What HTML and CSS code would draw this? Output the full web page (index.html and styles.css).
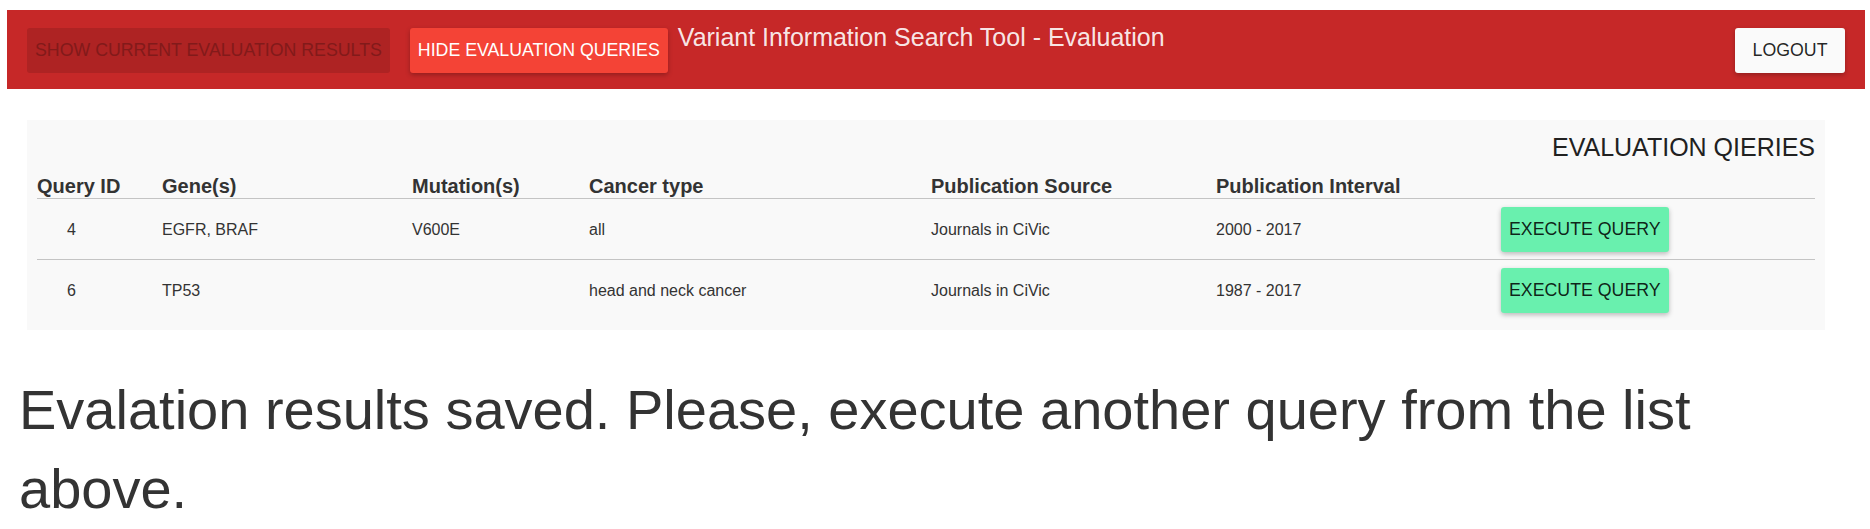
FILE: index.html
```html
<!DOCTYPE html>
<html lang="en">
<head>
<meta charset="utf-8">
<title>Variant Information Search Tool - Evaluation</title>
<link rel="stylesheet" href="styles.css">
</head>
<body>
<header class="toolbar">
  <button class="btn btn-disabled" disabled>Show current evaluation results</button>
  <button class="btn btn-accent">Hide evaluation queries</button>
  <h1 class="app-title">Variant Information Search Tool - Evaluation</h1>
  <button class="btn btn-light btn-logout">Logout</button>
</header>

<section class="queries">
  <h2 class="queries-title">EVALUATION QIERIES</h2>
  <table class="qtable">
    <colgroup>
      <col class="c-id"><col class="c-gene"><col class="c-mut"><col class="c-cancer"><col class="c-src"><col class="c-int"><col class="c-act">
    </colgroup>
    <thead>
      <tr>
        <th>Query ID</th>
        <th>Gene(s)</th>
        <th>Mutation(s)</th>
        <th>Cancer type</th>
        <th>Publication Source</th>
        <th>Publication Interval</th>
        <th></th>
      </tr>
    </thead>
    <tbody>
      <tr>
        <td class="id">4</td>
        <td>EGFR, BRAF</td>
        <td>V600E</td>
        <td>all</td>
        <td>Journals in CiVic</td>
        <td>2000 - 2017</td>
        <td><button class="btn btn-green">Execute query</button></td>
      </tr>
      <tr>
        <td class="id">6</td>
        <td>TP53</td>
        <td></td>
        <td>head and neck cancer</td>
        <td>Journals in CiVic</td>
        <td>1987 - 2017</td>
        <td><button class="btn btn-green">Execute query</button></td>
      </tr>
    </tbody>
  </table>
</section>

<p class="message">Evalation results saved. Please, execute another query from the list above.</p>
</body>
</html>
```

FILE: styles.css
```css
html, body {
  background: #ffffff;
}

body {
  margin: 0;
  padding: 10px 5px 0 7px;
  font-family: "Liberation Sans", Arial, sans-serif;
  color: #333333;
}

.toolbar {
  display: flex;
  align-items: flex-start;
  height: 79px;
  padding: 0 20px;
  background: #c62828;
  box-sizing: border-box;
}

.btn {
  font-family: "Liberation Sans", Arial, sans-serif;
  font-size: 17.75px;
  text-transform: uppercase;
  height: 45px;
  line-height: 45px;
  min-width: 110px;
  padding: 0 8px;
  border: 0;
  border-radius: 3px;
  white-space: nowrap;
  cursor: pointer;
}

.toolbar .btn {
  margin-top: 18px;
}

.btn-disabled {
  background: #ae2323;
  color: #821a1a;
  cursor: default;
}

.btn-accent {
  margin-left: 20px;
  background: #f44336;
  color: #ffffff;
  box-shadow: 0 2px 5px rgba(0, 0, 0, 0.26);
}

.app-title {
  margin: 13px 0 0 10px;
  font-size: 25px;
  line-height: 28px;
  font-weight: normal;
  color: rgba(255, 255, 255, 0.9);
}

.btn-light {
  background: #fafafa;
  color: rgba(0, 0, 0, 0.87);
  box-shadow: 0 2px 5px rgba(0, 0, 0, 0.26);
}

.btn-logout {
  margin-left: auto;
}

.btn-green {
  background: #69f0ae;
  color: rgba(0, 0, 0, 0.87);
  box-shadow: 0 2px 5px rgba(0, 0, 0, 0.26);
}

.queries {
  margin: 31px 40px 0 20px;
  padding: 13px 10px 10px 10px;
  background: #f9f9f9;
}

.queries-title {
  margin: 0 0 14px 0;
  text-align: right;
  font-size: 25px;
  line-height: 28px;
  font-weight: normal;
  color: #212121;
}

.qtable {
  width: 100%;
  table-layout: fixed;
  border-collapse: collapse;
}

.c-id { width: 125px; }
.c-gene { width: 250px; }
.c-mut { width: 177px; }
.c-cancer { width: 342px; }
.c-src { width: 285px; }
.c-int { width: 285px; }

.qtable th {
  padding: 0;
  text-align: left;
  font-size: 20px;
  line-height: 23px;
  font-weight: bold;
  color: #333333;
  border-bottom: 1px solid #c4c4c4;
}

.qtable td {
  padding: 8px 0 7px 0;
  font-size: 16px;
  line-height: 20px;
  vertical-align: middle;
  color: #333333;
}

.qtable tbody tr:not(:last-child) td {
  border-bottom: 1px solid #c4c4c4;
}

.qtable td.id {
  padding-left: 30px;
}

.message {
  margin: 40px 0 0 12px;
  font-size: 56px;
  line-height: 79px;
  font-weight: normal;
  color: #333333;
}
```
